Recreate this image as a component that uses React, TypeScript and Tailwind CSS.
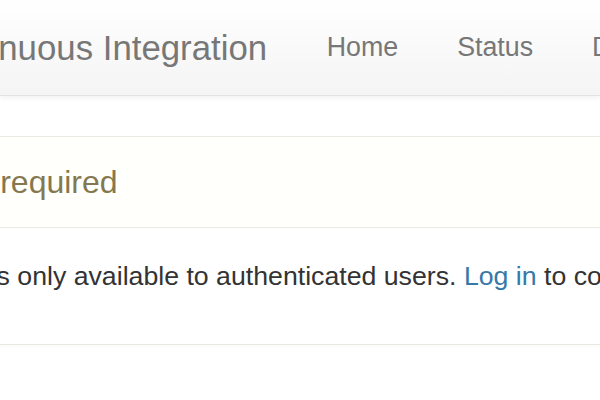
import React from 'react'

const font = { fontFamily: '"Liberation Sans", Arial, sans-serif' }

function Navbar() {
  return (
    <nav className="h-[96px] border-b border-[#e3e3e3] bg-gradient-to-b from-white to-[#f4f4f4] shadow-[0_2px_6px_rgba(0,0,0,0.06)]">
      <div className="-ml-[83px] flex h-full items-center whitespace-nowrap">
        <a className="pr-[30px] text-[34.8px] leading-[34px] text-[#777777]">Continuous Integration</a>
        <ul className="flex items-center">
          {['Home', 'Status', 'Documentation'].map(label => (
            <li key={label}>
              <a className="block px-[29.5px] text-[26.8px] leading-[27px] text-[#777777]">{label}</a>
            </li>
          ))}
        </ul>
      </div>
    </nav>
  )
}

function LoginPanel() {
  return (
    <div className="mt-[40px] border-y border-[#ebe9e0] bg-white shadow-[0_1px_3px_rgba(0,0,0,0.03)]">
      <div className="border-b border-[#ebe9e0] bg-[#fffffb] py-[27px]">
        <h3 className="-ml-[87px] whitespace-nowrap text-[32px] leading-[36px] text-[#85784f]">Login required</h3>
      </div>
      <div className="pt-[30px] pb-[49px]">
        <p className="-ml-[134px] whitespace-nowrap text-[26.7px] leading-[37px] text-[#333333]">
          This page is only available to authenticated users.{' '}
          <a className="text-[#3579a8]">Log in</a> to continue.
        </p>
      </div>
    </div>
  )
}

export default function App() {
  return (
    <div className="h-[400px] w-[600px] overflow-hidden bg-white" style={font}>
      <Navbar />
      <LoginPanel />
    </div>
  )
}
